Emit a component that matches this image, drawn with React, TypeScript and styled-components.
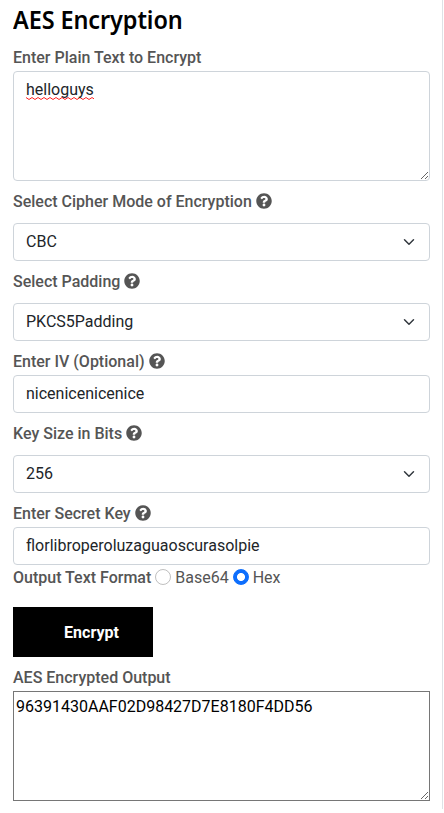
import React from "react";
import styled, { createGlobalStyle, css } from "styled-components";

const GlobalStyle = createGlobalStyle`
  *, *::before, *::after { box-sizing: border-box; }
  body {
    margin: 0;
    background: #fff;
    color: #555;
    font-family: Roboto, "Liberation Sans", sans-serif;
    font-size: 16px;
    line-height: 24px;
    overflow: hidden;
  }
`;

const Panel = styled.main`
  width: 443px;
  height: 809px;
  padding: 0 12px 0 13px;
  border-right: 1px solid #dee2e6;
`;

const Title = styled.h1`
  margin: 0;
  height: 45px;
  font-family: "Noto Sans", "Open Sans", sans-serif;
  font-size: 25px;
  font-weight: 600;
  line-height: 38px;
  letter-spacing: -0.1px;
  white-space: nowrap;
  color: #000;
  transform: scaleX(0.938);
  transform-origin: left;
`;

const Field = styled.div<{ $gap?: number }>`
  display: flex;
  flex-direction: column;
  gap: ${(p) => p.$gap ?? 2}px;
  margin-bottom: 8px;
`;

const Label = styled.label`
  display: flex;
  align-items: flex-start;
  gap: 4px;
  height: 24px;
  font-weight: 500;
  line-height: 26px;
  white-space: nowrap;
`;

const HelpSvg = styled.svg`
  width: 16px;
  height: 16px;
  margin-top: 4px;
  flex: none;
`;

const control = css`
  display: block;
  width: 100%;
  padding: 6px 12px;
  border: 1px solid #ced4da;
  border-radius: 4px;
  background-color: #fff;
  color: #212529;
  font: inherit;
  outline: none;
`;

const Input = styled.input`
  ${control}
  height: 38px;
  padding: 5px 12px 7px;
`;

const Select = styled.select`
  ${control}
  height: 38px;
  appearance: none;
  background-image: url("data:image/svg+xml,%3csvg xmlns='http://www.w3.org/2000/svg' viewBox='0 0 16 16'%3e%3cpath fill='none' stroke='%23343a40' stroke-linecap='round' stroke-linejoin='round' stroke-width='2' d='M2 5l6 6 6-6'/%3e%3c/svg%3e");
  background-repeat: no-repeat;
  background-position: right 12px center;
  background-size: 16px 12px;
`;

const PlainText = styled.div`
  ${control}
  height: 110px;
  overflow: auto;
  resize: vertical;
`;

const Misspelled = styled.span`
  display: inline-block;
  height: 24px;
  background: url("data:image/svg+xml,%3csvg xmlns='http://www.w3.org/2000/svg' width='6' height='3'%3e%3cpath fill='none' stroke='%23f22' stroke-width='1' d='M-1 1.2L0 .5L3 2.5L6 .5L7 1.2'/%3e%3c/svg%3e") 0 19px repeat-x;
`;

const Output = styled.textarea`
  display: block;
  width: 100%;
  height: 110px;
  padding: 3px 2px 2px;
  border: 1px solid #767676;
  border-radius: 0;
  color: #000;
  font: inherit;
  resize: vertical;
`;

const FormatRow = styled.div`
  display: flex;
  align-items: flex-start;
  height: 24px;
  margin-top: -8px;
  margin-bottom: 18px;
  line-height: 26px;
  white-space: nowrap;
`;

const FormatTitle = styled.span`
  margin-right: 4px;
  font-weight: 500;
`;

const Option = styled.label`
  display: flex;
  align-items: flex-start;
  gap: 4px;
  margin-right: 4px;
`;

const Radio = styled.input`
  appearance: none;
  width: 16px;
  height: 16px;
  margin: 4px 0 0;
  border: 1px solid rgba(0, 0, 0, 0.25);
  border-radius: 50%;
  &:checked {
    border-color: #0d6efd;
    background: radial-gradient(circle, #fff 3.6px, #0d6efd 4.4px);
  }
`;

const EncryptButton = styled.button`
  display: block;
  width: 140px;
  height: 50px;
  margin: 0 0 8px;
  padding: 2px 0 0 17px;
  border: 0;
  background: #000;
  color: #fff;
  font: inherit;
  font-weight: 700;
`;

const HelpIcon = () => (
  <HelpSvg viewBox="0 0 512 512" aria-label="Help">
    <path
      fill="#555"
      d="M504 256c0 136.997-111.043 248-248 248S8 392.997 8 256C8 119.083 119.043 8 256 8s248 111.083 248 248zM262.655 90c-54.497 0-89.255 22.957-116.549 63.758-3.536 5.286-2.353 12.415 2.715 16.258l34.699 26.31c5.205 3.947 12.621 3.008 16.665-2.122 17.864-22.658 30.113-35.797 57.303-35.797 20.429 0 45.698 13.148 45.698 32.958 0 14.976-12.363 22.667-32.534 33.976C247.128 238.528 216 254.941 216 296v4c0 6.627 5.373 12 12 12h56c6.627 0 12-5.373 12-12v-1.333c0-28.462 83.186-29.647 83.186-106.667 0-58.002-60.165-102-116.531-102zM256 338c-25.365 0-46 20.635-46 46 0 25.364 20.635 46 46 46s46-20.636 46-46c0-25.365-20.635-46-46-46z"
    />
  </HelpSvg>
);

const SelectField = ({ label, value }: { label: string; value: string }) => (
  <Field $gap={10}>
    <Label>
      {label}
      <HelpIcon />
    </Label>
    <Select defaultValue={value}>
      <option>{value}</option>
    </Select>
  </Field>
);

const InputField = ({ label, value }: { label: string; value: string }) => (
  <Field>
    <Label>
      {label}
      <HelpIcon />
    </Label>
    <Input type="text" defaultValue={value} spellCheck={false} />
  </Field>
);

export default function App() {
  return (
    <>
      <GlobalStyle />
      <Panel>
        <Title>AES Encryption</Title>
        <Field>
          <Label>Enter Plain Text to Encrypt</Label>
          <PlainText>
            <Misspelled>helloguys</Misspelled>
          </PlainText>
        </Field>
        <SelectField label="Select Cipher Mode of Encryption" value="CBC" />
        <SelectField label="Select Padding" value="PKCS5Padding" />
        <InputField label="Enter IV (Optional)" value="nicenicenicenice" />
        <SelectField label="Key Size in Bits" value="256" />
        <InputField label="Enter Secret Key" value="florlibroperoluzaguaoscurasolpie" />
        <FormatRow>
          <FormatTitle>Output Text Format</FormatTitle>
          <Option>
            <Radio type="radio" name="format" />
            Base64
          </Option>
          <Option>
            <Radio type="radio" name="format" defaultChecked />
            Hex
          </Option>
        </FormatRow>
        <EncryptButton type="button">Encrypt</EncryptButton>
        <Field>
          <Label>AES Encrypted Output</Label>
          <Output defaultValue="96391430AAF02D98427D7E8180F4DD56" spellCheck={false} />
        </Field>
      </Panel>
    </>
  );
}
